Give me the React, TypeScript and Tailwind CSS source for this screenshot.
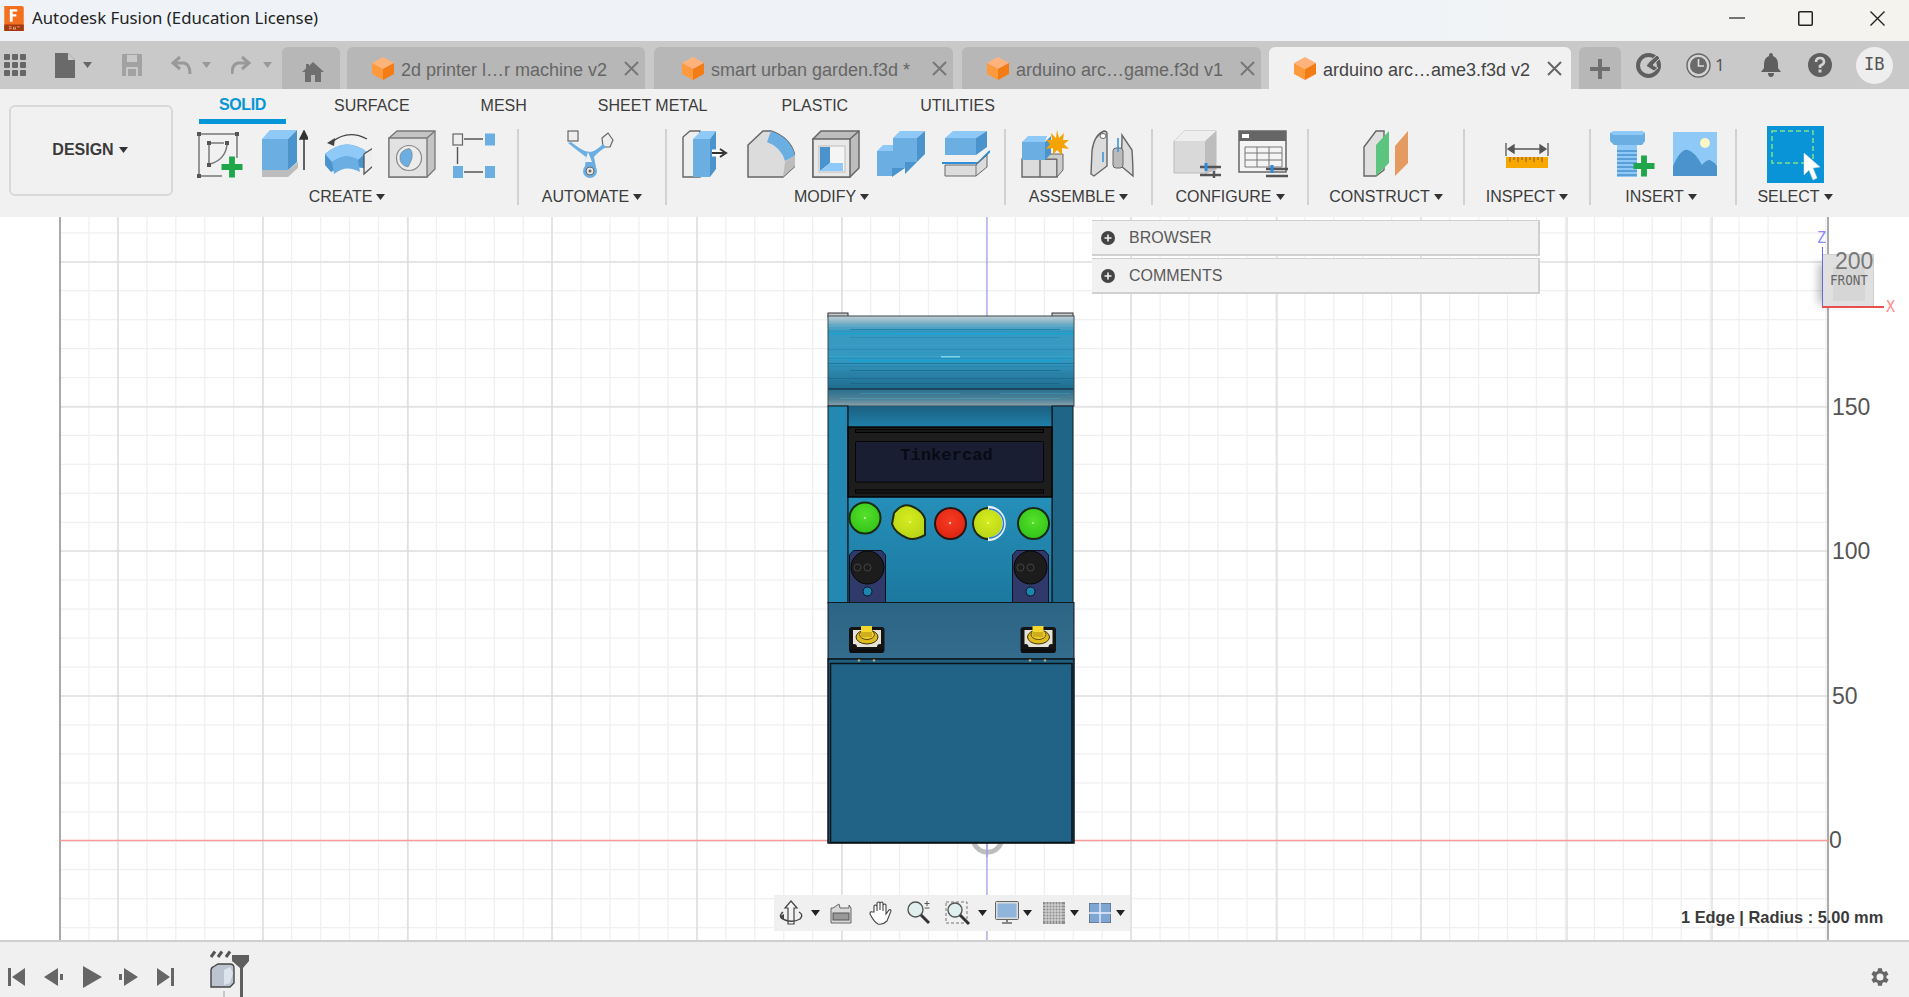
import React from "react";

const B1 = "#6aaee2", B2 = "#8ec9f8", B3 = "#4a93cc", G1 = "#dcdcdc", G2 = "#bdbdbd";

function Caret({ c = "#333" }: { c?: string }) {
  return (
    <svg width="9" height="6" viewBox="0 0 9 6" className="shrink-0">
      <path d="M0 0h9L4.5 6z" fill={c} />
    </svg>
  );
}

function I({ children, w = 48, h = 48, className = "" }: { children: React.ReactNode; w?: number; h?: number; className?: string }) {
  return (
    <svg width={w} height={h} viewBox={`0 0 ${w} ${h}`} className={"shrink-0 " + className}>
      {children}
    </svg>
  );
}

const Plus = ({ x, y, s = 20 }: { x: number; y: number; s?: number }) => (
  <path d={`M${x - s / 2} ${y}h${s}M${x} ${y - s / 2}v${s}`} stroke="#1fa64b" strokeWidth={s / 3.6} fill="none" />
);

function SketchIcon() {
  return (
    <I>
      <path d="M3 4H41M3 4V46H26M41 4V28" stroke="#777" strokeWidth="1.5" fill="none" />
      {[[1, 2], [39, 2], [1, 44]].map(([x, y]) => <rect key={x + "-" + y} x={x} y={y} width="4" height="4" fill="#555" />)}
      <path d="M13 13H28M13 13V33M31 15Q29 30 14 34" stroke="#777" strokeWidth="1.5" fill="none" />
      <rect x="11" y="11" width="4" height="4" fill="#555" /><rect x="11" y="33" width="4" height="4" fill="#555" />
      <rect x="29" y="11" width="4" height="4" fill="#555" />
      <Plus x={36} y={37} s={21} />
    </I>
  );
}
function ExtrudeIcon() {
  return (
    <I>
      <path d="M2 40V47H28L38 38V32L28 40z" fill={G2} />
      <path d="M2 9H28V40H2z" fill={B1} /><path d="M2 9L10 0H37L28 9z" fill={B2} /><path d="M28 9L37 0V32L28 40z" fill={B3} />
      <path d="M44 40V4M40 9L44 1L48 9z" stroke="#333" strokeWidth="1.5" fill="#333" />
    </I>
  );
}
function RevolveIcon() {
  return (
    <I>
      <path d="M8 12Q24 -1 43 9" stroke="#444" strokeWidth="1.4" fill="none" />
      <path d="M3 13L11 8L10 16z" fill="#444" />
      <path d="M1 24Q22 6 43 22L43 38Q34 38 28 36Q16 36 7 42L1 35z" fill={B3} />
      <path d="M1 24Q22 6 43 22L34 30Q22 22 8 32z" fill={B2} />
      <path d="M8 32Q22 22 34 30L36 42Q22 34 10 44z" fill={B1} />
      <path d="M40 24L49 18V36L40 44z" fill="#eee" stroke="#555" strokeWidth="1.3" />
    </I>
  );
}
function HoleIcon() {
  return (
    <I>
      <path d="M1 8L9 1H47V39L39 47H1z" fill="#c4c4c4" stroke="#777" strokeWidth="1.3" />
      <path d="M1 8H39V47H1z" fill="#e2e2e2" stroke="#777" strokeWidth="1.3" />
      <path d="M39 8L47 1" stroke="#777" strokeWidth="1.3" />
      <circle cx="21" cy="28" r="12.5" fill="#ececec" stroke="#888" strokeWidth="1.2" />
      <path d="M12 26Q13 20 21 18.5Q25 20 24 28Q22 34 20 37Q11 35 12 26z" fill={B1} stroke="#777" strokeWidth=".6" />
    </I>
  );
}
function PatternIcon() {
  return (
    <I>
      <rect x="1" y="4" width="9.5" height="11" fill="#eee" stroke="#666" strokeWidth="1.2" />
      <rect x="33" y="3.5" width="10" height="12" fill={B1} />
      <rect x="1" y="36" width="10" height="12" fill={B1} />
      <rect x="33" y="36" width="10" height="12" fill={B1} />
      <path d="M12 9H31M12 42H31M5.5 17V34" stroke="#555" strokeWidth="1.4" />
    </I>
  );
}
function AutomateIcon() {
  return (
    <I w={52}>
      <rect x="2" y="1" width="10" height="10" fill="#eee" stroke="#666" strokeWidth="1.2" />
      <path d="M36 8L42 3L47 10L44 17H37z" fill="#eee" stroke="#666" strokeWidth="1.2" />
      <path d="M5 12Q10 16 15 19Q19 22 24 22Q30 21 37 14L40 17Q32 22 28 27L30 37H19L20 27Q12 21 2 13z" fill={B1} />
      <path d="M22 22L26 32H19z" fill="#f1f1f1" />
      <circle cx="24" cy="41" r="7" fill={B1} />
      <circle cx="24" cy="41" r="4" fill="#e8e8e8" stroke="#666" /><circle cx="24" cy="41" r="1.5" fill="#666" />
    </I>
  );
}
function PressPullIcon() {
  return (
    <I>
      <path d="M1 7L8 1H18V47H1z" fill="#eee" stroke="#666" strokeWidth="1.4" />
      <path d="M11 9H28V47H11z" fill={B1} /><path d="M11 9L19 1H34L28 9z" fill={B2} /><path d="M28 9L34 1V39L28 47z" fill={B3} />
      <path d="M30 23H44" stroke="#fff" strokeWidth="7" />
      <path d="M30 23H42M38 19L44 23L38 27" stroke="#333" strokeWidth="2" fill="none" />
    </I>
  );
}
function FilletIcon() {
  return (
    <I>
      <path d="M1 15L16 1H24Q44 8 48 26V36L36 47H1z" fill={G1} stroke="#666" strokeWidth="1.5" />
      <path d="M20 12L24 1Q44 8 48 26L38 31Q34 17 20 12z" fill={B1} />
      <path d="M38 32L48 25V36L36 47z" fill={G2} />
    </I>
  );
}
function ShellIcon() {
  return (
    <I>
      <path d="M1 9L9 1H47V38L38 47H1z" fill={G2} stroke="#666" strokeWidth="1.5" />
      <path d="M1 9H38V47H1z" fill="#e8e8e8" stroke="#666" strokeWidth="1.5" />
      <path d="M38 9L47 1" stroke="#666" strokeWidth="1.5" />
      <rect x="7" y="16" width="26" height="26" fill="#f5f5f5" stroke="#bbb" />
      <path d="M8 17H18V33L8 41z" fill={B3} /><path d="M8 41L18 33H31V41z" fill={B2} />
    </I>
  );
}
function CombineIcon() {
  return (
    <I>
      <path d="M16 8H40V32H28V38H15V46H0V21H14V17H16z" fill={B1} />
      <path d="M16 8L23 1H48L40 8z" fill={B2} /><path d="M40 8L48 1V24L40 32z" fill={B3} />
      <path d="M0 21L6 15H16V21z" fill={B2} />
      <path d="M28 32H40L28 44z" fill={B3} /><path d="M15 38H28L15 47z" fill={B3} />
    </I>
  );
}
function OffsetIcon() {
  return (
    <I>
      <path d="M3 8L11 1H45L34 8z" fill={B2} />
      <path d="M34 8L45 1V17L34 25z" fill={B3} /><rect x="3" y="8" width="31" height="17" fill={B1} />
      <path d="M0 33H36L48 21" stroke="#2f8fd8" strokeWidth="2" fill="none" />
      <path d="M3 35H34L45 25V37L34 46H3z" fill={G1} stroke="#666" strokeWidth="1" />
      <path d="M34 35V46" stroke="#777" />
    </I>
  );
}
function NewComponentIcon() {
  return (
    <I w={50}>
      <path d="M1 29H19V47H1zM19 29H36V47H19z" fill={G1} stroke="#666" strokeWidth="1.4" />
      <path d="M19 29L27 24H42V40L36 47V29z" fill="#ccc" stroke="#666" />
      <path d="M1 12H24V30H1z" fill={B1} /><path d="M1 12L7 6H26L24 12z" fill={B2} /><path d="M24 12L30 6V24L24 30z" fill={B3} />
      <path d="M36 0L38 8L43 3L42 10L48 10L43 14L48 19L41 18L41 25L36 20L32 25L32 18L25 19L29 14L25 10L31 10L30 3L35 8z" fill="#f5a300" />
    </I>
  );
}
function JointIcon() {
  return (
    <I>
      <path d="M3 21Q5 5 15 1Q18 1 18 4V36L5 46L2 44z" fill={G1} stroke="#666" strokeWidth="1.4" />
      <path d="M33 10V5L43 20Q44 36 44 46L32 36z" fill={G1} stroke="#666" strokeWidth="1.4" />
      <rect x="24" y="18" width="10" height="20" rx="3" fill="#bbb" stroke="#666" />
      <ellipse cx="14" cy="6" rx="3" ry="2.5" fill="#fff" stroke="#666" />
      <path d="M14 22V32M29 8V22" stroke="#3a96e0" strokeWidth="1.6" />
    </I>
  );
}
function ConfigIcon() {
  return (
    <I>
      <path d="M1 11L11 1H43V40H34V43H1z" fill="#d9d9d9" stroke="#bbb" />
      <path d="M32 11L43 1V40L32 44z" fill={G2} /><path d="M1 11L11 1H43L32 11z" fill="#eee" />
      <path d="M27 37H48M27 45H48" stroke="#555" strokeWidth="2.4" />
      <path d="M33 33V41" stroke="#2a8ae0" strokeWidth="3" /><path d="M41 41V48" stroke="#555" strokeWidth="2.4" />
    </I>
  );
}
function TableIcon() {
  return (
    <I w={50}>
      <rect x="1" y="1" width="47" height="41" fill="#f4f4f4" stroke="#666" strokeWidth="1.5" />
      <rect x="1" y="1" width="47" height="10" fill="#666" /><rect x="4" y="4" width="7" height="4" fill="#fff" />
      <path d="M7 17H44V37H7zM7 23H44M7 30H44M19 17V37M31 17V37" stroke="#777" strokeWidth="1" fill="none" />
      <path d="M28 39H50M28 46H50" stroke="#555" strokeWidth="2.4" fill="none" />
      <path d="M34 35V43" stroke="#2a8ae0" strokeWidth="3" />
    </I>
  );
}
function ConstructIcon() {
  return (
    <I>
      <path d="M2 17L14 1H22V40L14 46H2z" fill="#e0e0e0" stroke="#666" strokeWidth="1.4" />
      <path d="M14 15L27 1V33L14 46z" fill="#5bc47e" />
      <path d="M33 16L46 1V33L33 46z" fill="#e49a60" />
    </I>
  );
}
function InspectIcon() {
  return (
    <I w={44}>
      <path d="M1 13V26M43 13V26" stroke="#555" strokeWidth="1.3" />
      <path d="M4 19H40M3 19L9 15V23zM41 19L35 15V23z" stroke="#555" strokeWidth="1.3" fill="#555" />
      <rect x="1" y="27" width="42" height="11" fill="#f6a800" />
      <path d="M5 27v5M9 27v3M13 27v5M17 27v3M21 27v5M25 27v3M29 27v5M33 27v3M37 27v5" stroke="#8a5a10" strokeWidth="1" />
    </I>
  );
}
function BoltIcon() {
  return (
    <I w={50}>
      <path d="M1 3L5 1H33L36 3V11L33 15H5L1 11z" fill={B1} />
      <path d="M1 3L5 1H33L36 3L33 5H5z" fill={B2} />
      <rect x="8" y="15" width="20" height="32" fill={B2} />
      <path d="M8 21H28M8 25H28M8 29H28M8 33H28M8 37H28M8 41H28M8 45H28" stroke={B3} strokeWidth="1.6" />
      <Plus x={35} y={36} s={21} />
    </I>
  );
}
function ImageIcon() {
  return (
    <I w={44}>
      <rect x="0" y="2" width="44" height="44" fill={B2} />
      <path d="M0 36Q8 18 15 20Q22 22 29 35Q33 30 37 30Q41 32 44 36V46H0z" fill={B3} />
      <circle cx="32" cy="13" r="5" fill="#fbf6c4" />
    </I>
  );
}
function SelectIcon() {
  return (
    <I w={57} h={57}>
      <rect width="57" height="57" fill="#0994d8" />
      <rect x="5" y="5" width="41" height="32" fill="none" stroke="#7fe08e" strokeWidth="1.5" strokeDasharray="5 3" />
      <path d="M37 27L53 41L46 42L50 52L46 54L42 44L37 49z" fill="#fff" stroke="#ddd" strokeWidth=".5" />
    </I>
  );
}

function Cube() {
  return (
    <svg width="22" height="23" viewBox="0 0 22 23" className="shrink-0">
      <path d="M11 0L22 6L11 12L0 6z" fill="#ffb37a" />
      <path d="M0 6L11 12V23L0 17z" fill="#ff9a3c" />
      <path d="M22 6L11 12V23L22 17z" fill="#f47c14" />
    </svg>
  );
}

function Tab({ label, active = false, w }: { label: string; active?: boolean; w: string }) {
  return (
    <div className={`flex items-center h-[42px] rounded-t-[6px] ${w} ${active ? "bg-[#f1f1f1] text-[#444]" : "bg-[#b7b7b7] text-[#666]"}`}>
      <Cube />
      <span className="ml-[7px] text-[18px] whitespace-nowrap leading-none pt-[4px]">{label}</span>
      <svg width="15" height="15" viewBox="0 0 15 15" className="ml-auto shrink-0">
        <path d="M1 1L14 14M14 1L1 14" stroke={active ? "#666" : "#777"} strokeWidth="2" />
      </svg>
    </div>
  );
}

function Group({ label, w, lc = "", children }: { label: string; w: string; lc?: string; children: React.ReactNode }) {
  return (
    <div className={`flex flex-col items-center shrink-0 ${w}`}>
      <div className="h-[58px] flex items-center">{children}</div>
      <div className={`h-[27px] flex items-center gap-[4px] text-[16px] text-[#3c3c3c] whitespace-nowrap ${lc}`}>
        {label}
        <Caret />
      </div>
    </div>
  );
}
const Sep = () => <div className="w-[2px] h-[76px] mt-[4px] bg-[#d2d2d2] shrink-0 -mx-[1px]" />;

const vMinor = Array.from({ length: 62 }, (_, i) => 60 + i * 28.95);
const hLines = Array.from({ length: 26 }, (_, i) => 232.8 + i * 28.95);
const vMajor = [118, 263, 408, 552, 697, 842, 1131, 1277, 1421, 1567, 1712];
const hMajor = [262, 407, 551, 696];

const roofStripes: [number, number, string][] = [
  [322, 1, "#7eb3c9"], [324, 1, "#5ea9c7"], [327, 1, "#4aa3c6"], [329, 1, "#1f85ad"], [331, 1, "#2b93bd"], [333, 1.5, "#17a3cf"],
  [337, 1, "#2a8fb8"], [345, 1, "#3a9ec6"], [349, 1, "#2b8ab3"], [352, 1, "#2f96bf"], [356, 1, "#39a1c8"], [358, 1, "#1a94c4"],
  [360, 1.5, "#16a0d0"], [363, 1, "#1c7ba3"], [366, 1, "#2a86ad"], [370, 1, "#1d7095"], [373, 1, "#2b7ea3"], [378, 1, "#1e6c8f"], [383, 1, "#1c6788"],
];

function Canvas() {
  return (
    <div className="relative flex-1 bg-white overflow-hidden">
      <svg width="1909" height="723" viewBox="0 217 1909 723" className="block">
        <defs>
          <linearGradient id="roof" x1="0" y1="0" x2="0" y2="1">
            <stop offset="0" stopColor="#c3d0d6" /><stop offset=".08" stopColor="#88b4c7" /><stop offset=".2" stopColor="#3a9ac1" />
            <stop offset=".6" stopColor="#3498c0" /><stop offset="1" stopColor="#1f6c8f" />
          </linearGradient>
          <linearGradient id="roof2" x1="0" y1="0" x2="0" y2="1">
            <stop offset="0" stopColor="#2a6f8f" /><stop offset=".6" stopColor="#4f8296" /><stop offset="1" stopColor="#8ba2ad" />
          </linearGradient>
          <linearGradient id="panel" x1="0" y1="0" x2="0" y2="1">
            <stop offset="0" stopColor="#2590ba" /><stop offset="1" stopColor="#1c789f" />
          </linearGradient>
          <linearGradient id="head" x1="0" y1="0" x2="0" y2="1">
            <stop offset="0" stopColor="#1c5f80" /><stop offset="1" stopColor="#1f80aa" />
          </linearGradient>
          <linearGradient id="lower" x1="0" y1="0" x2="0" y2="1">
            <stop offset="0" stopColor="#2b6485" /><stop offset="1" stopColor="#346c8e" />
          </linearGradient>
          <radialGradient id="gr" cx=".5" cy=".4" r=".6"><stop offset="0" stopColor="#55e02a" /><stop offset="1" stopColor="#33c41a" /></radialGradient>
          <radialGradient id="ye" cx=".5" cy=".4" r=".6"><stop offset="0" stopColor="#d5ec1e" /><stop offset="1" stopColor="#b9d518" /></radialGradient>
          <radialGradient id="re" cx=".5" cy=".4" r=".6"><stop offset="0" stopColor="#f83a22" /><stop offset="1" stopColor="#dd2412" /></radialGradient>
        </defs>
        {vMinor.map((x) => <path key={x} d={`M${x} 217V940`} stroke="#f0f0f0" strokeWidth="1.3" />)}
        {hLines.map((y) => <path key={y} d={`M60 ${y}H1828`} stroke="#f0f0f0" strokeWidth="1.3" />)}
        {vMajor.map((x) => <path key={x} d={`M${x} 217V940`} stroke="#d8d8d8" strokeWidth="1.2" />)}
        {hMajor.map((y) => <path key={y} d={`M60 ${y}H1828`} stroke="#d8d8d8" strokeWidth="1.2" />)}
        <path d="M60 217V940" stroke="#8f8f8f" strokeWidth="1.5" />
        <path d="M1828 217V940" stroke="#8f8f8f" strokeWidth="1.5" />
        <path d="M987 217V940" stroke="#9c9ce8" strokeWidth="1.2" />
        <path d="M60 840.5H1828" stroke="#f79a9a" strokeWidth="1.5" />

        {/* origin marker */}
        <path d="M974 843A14.5 14.5 0 0 0 1001 843" fill="none" stroke="#bdbdbd" strokeWidth="5" />
        <path d="M987 843V857" stroke="#9c9ce8" strokeWidth="1.2" />

        {/* arcade cabinet */}
        <rect x="828" y="313" width="20" height="4" fill="#c8c8c8" stroke="#333" />
        <rect x="1052" y="313" width="21" height="4" fill="#c8c8c8" stroke="#333" />
        <rect x="828" y="316" width="246" height="73" fill="url(#roof)" />
        {roofStripes.map(([y, h, c], i) => (
          <rect key={i} x={i % 3 === 0 ? 850 : 828} y={y} width={i % 3 === 0 ? 210 : 246} height={h} fill={c} />
        ))}
        <rect x="890" y="333" width="123" height="1.5" fill="#18a4d4" />
        <rect x="941" y="356" width="19" height="1.5" fill="#7fd2ec" />
        <rect x="828" y="389" width="246" height="17" fill="url(#roof2)" />
        <rect x="860" y="393" width="100" height="1" fill="#3f8aa8" /><rect x="1000" y="393" width="70" height="1" fill="#3f8aa8" />
        <rect x="840" y="398" width="220" height="1" fill="#4a94b0" />
        <path d="M828 389H1074" stroke="#12222c" strokeWidth="1" />
        <rect x="828" y="316" width="246" height="90" fill="none" stroke="#3c4a50" strokeWidth="1" />

        <rect x="828" y="406" width="20" height="197" fill="#2389b3" stroke="#101a20" strokeWidth="1" />
        <rect x="1052" y="406" width="21" height="197" fill="#1f6588" stroke="#101a20" strokeWidth="1" />
        <rect x="848" y="406" width="204" height="21" fill="url(#head)" />
        <rect x="848" y="497" width="204" height="106" fill="url(#panel)" />
        <path d="M848 406V603M1052 406V603" stroke="#0c1418" strokeWidth="1.2" />

        <rect x="848" y="427" width="204" height="70" fill="#1d1d1d" stroke="#050505" strokeWidth="1.5" />
        <rect x="855.5" y="429.5" width="188" height="3" fill="#181818" stroke="#000" strokeWidth="1" />
        <rect x="855.5" y="490" width="188" height="3" fill="#181818" stroke="#000" strokeWidth="1" />
        <rect x="855.5" y="441.5" width="188" height="40.5" rx="1" fill="#191e33" stroke="#060606" strokeWidth="1" />
        <text x="946.5" y="460" textAnchor="middle" fontFamily="'Liberation Mono', monospace" fontSize="17" fontWeight="700" fill="#070b14" letterSpacing=".1">Tinkercad</text>

        <circle cx="865" cy="518" r="15.5" fill="url(#gr)" stroke="#1c2a14" strokeWidth="2" />
        <path d="M894 513Q902 503 911 506Q922 510 925 519V535Q914 541 907 538Q895 533 892 524z" fill="url(#ye)" stroke="#1f2a10" strokeWidth="2" />
        <circle cx="950.5" cy="523.5" r="15.5" fill="url(#re)" stroke="#2a1512" strokeWidth="2" />
        <circle cx="988.5" cy="523.5" r="15.5" fill="url(#ye)" stroke="#1f2a10" strokeWidth="2" />
        <path d="M988 507.5A16 16 0 0 1 988 539.5" fill="none" stroke="#e7f0fa" strokeWidth="3.5" />
        <path d="M989 509A14.5 14.5 0 0 1 989 538" fill="none" stroke="#2b7fd6" strokeWidth="1.5" />
        <circle cx="1033.5" cy="523.5" r="15.5" fill="url(#gr)" stroke="#1a2a18" strokeWidth="2" />
        <circle cx="865" cy="518" r="1" fill="#c9f5b5" /><circle cx="910" cy="522" r="1" fill="#eef7a8" /><circle cx="950" cy="523" r="1.2" fill="#ffc0b0" /><circle cx="988" cy="523" r="1" fill="#eef7a8" /><circle cx="1033" cy="523" r="1" fill="#c9f5b5" />

        {[849.5, 1012.5].map((x) => (
          <g key={x}>
            <path d={`M${x + 4} 550.5H${x + 32}L${x + 36} 555V603H${x}V555z`} fill="#2f3a6b" stroke="#0c1020" strokeWidth="1" />
            <circle cx={x + 18} cy="567.5" r="16.5" fill="#1c1c1c" stroke="#060606" />
            <circle cx={x + 18} cy="567.5" r="3.5" fill="none" stroke="#444" />
            <circle cx={x + 8} cy="567.5" r="3.5" fill="none" stroke="#444" />
            <circle cx={x + 18} cy="591.5" r="4.5" fill="#1b86ae" stroke="#0c1020" />
          </g>
        ))}

        <rect x="828" y="602.5" width="246" height="56.5" fill="url(#lower)" stroke="#101a20" strokeWidth="1" />
        {[849, 1020.5].map((x) => (
          <g key={x}>
            <rect x={x} y="627" width="35.5" height="26" rx="3" fill="#141414" />
            <rect x={x + 4} y="630" width="28" height="17" fill="#e6e3d8" />
            <circle cx={x + 5} cy="647" r="3" fill="#141414" /><circle cx={x + 31} cy="647" r="3" fill="#141414" />
            <ellipse cx={x + 18} cy="637" rx="11" ry="7" fill="#e0bb1e" stroke="#3a2f05" />
            <ellipse cx={x + 18} cy="634.5" rx="7.5" ry="5" fill="#efcf2a" stroke="#5a4808" />
            <rect x={x + 12} y="626" width="11" height="11" fill="#f4d62e" /><rect x={x + 12} y="632" width="11" height="5" fill="#d0ad1c" />
            <rect x={x + 1} y="649" width="33" height="4" fill="#0e0e0e" />
          </g>
        ))}
        <rect x="828" y="659" width="246" height="184" fill="#1f5f80" stroke="#0c1418" strokeWidth="1.5" />
        <rect x="830.5" y="663.5" width="241.5" height="179" fill="#206387" stroke="#0a1116" strokeWidth="1.5" />
        {[859, 874, 1030, 1045].map((x) => <circle key={x} cx={x} cy="660.5" r="1.3" fill="#b3a77a" />)}
      </svg>

      {/* axis numbers */}
      <span className="absolute left-[1832px] top-[175px] text-[23px] leading-[30px] text-[#555]">150</span>
      <span className="absolute left-[1832px] top-[319px] text-[23px] leading-[30px] text-[#555]">100</span>
      <span className="absolute left-[1832px] top-[464px] text-[23px] leading-[30px] text-[#555]">50</span>
      <span className="absolute left-[1829px] top-[608px] text-[23px] leading-[30px] text-[#555]">0</span>

      {/* view cube */}
      <div className="absolute left-[1822px] top-[37px] w-[52px] h-[53px] bg-[#e0e0e0] border border-[#d0d0d0] shadow-[-10px_3px_8px_-6px_rgba(0,0,0,0.25)]">
        <div className="absolute left-[10px] top-[12px] w-[32px] h-[34px] bg-[#d6d6d6]" />
        <span className="absolute left-[12px] -top-[4px] text-[23px] leading-[20px] text-[#777]">200</span>
        <span className="absolute left-[7px] top-[17px] text-[14px] leading-[16px] text-[#666] scale-x-90 origin-left font-['DejaVu_Sans_Mono',monospace]">FRONT</span>
      </div>
      <div className="absolute left-[1822px] top-[30px] w-[1px] h-[60px] bg-[#6a6ae8]" />
      <div className="absolute left-[1822px] top-[89px] w-[62px] h-[2px] bg-[#e85050]" />
      <span className="absolute left-[1817px] top-[12px] text-[15px] leading-[18px] text-[#8a8aff] font-['DejaVu_Sans_Mono',monospace]">Z</span>
      <span className="absolute left-[1886px] top-[81px] text-[15px] leading-[18px] text-[#ff8a8a] font-['DejaVu_Sans_Mono',monospace]">X</span>

      {/* browser / comments */}
      <div className="absolute left-[1092px] top-[3px] w-[448px] flex flex-col gap-[2px]">
        {["BROWSER", "COMMENTS"].map((t) => (
          <div key={t} className="h-[36px] bg-[#f1f1f1] border-r-2 border-b-2 border-t border-[#d0d0d0] flex items-center pl-[9px] pt-[1px] text-[16px] text-[#5a5a5a]">
            <svg width="14" height="14" viewBox="0 0 14 14" className="mr-[14px]">
              <circle cx="7" cy="7" r="7" fill="#444" /><path d="M3.5 7h7M7 3.5v7" stroke="#f1f1f1" strokeWidth="1.6" />
            </svg>
            {t}
          </div>
        ))}
      </div>

      {/* navigation bar */}
      <div className="absolute left-[774px] top-[678px] w-[356px] h-[36px] bg-[#f0f0f0] flex items-center pl-[5px]">
        <svg width="24" height="26" viewBox="0 0 24 26" className="shrink-0">
          <path d="M12 1L18 8H15V24H9V8H6z" fill="#f4f4f4" stroke="#444" strokeWidth="1.2" />
          <path d="M4 12Q-2 17 6 20Q14 23 21 19Q25 15 20 12" fill="none" stroke="#444" strokeWidth="1.4" />
          <path d="M1 16L5 14L5 20z" fill="#444" />
        </svg>
        <span className="ml-[8px]"><Caret c="#222" /></span>
        <svg width="24" height="24" viewBox="0 0 24 24" className="ml-[9px] shrink-0">
          <path d="M4 7L10 3L11 7H20V4L22 7V22H2V7z" fill="#d8d8d8" stroke="#666" />
          <rect x="4" y="12" width="16" height="7" fill="#999" stroke="#555" />
        </svg>
        <svg width="24" height="26" viewBox="0 0 24 26" className="ml-[16px] shrink-0">
          <path d="M5 12V6Q6 4 8 6V11V3Q10 1 11 3V10V3Q13 1 14 3V11V5Q16 3 17 5V14L20 10Q22 9 22 11L18 21Q14 25 9 24Q5 22 1 14Q1 11 3 12z" fill="#fff" stroke="#444" strokeWidth="1.1" />
        </svg>
        <svg width="26" height="26" viewBox="0 0 26 26" className="ml-[13px] shrink-0">
          <circle cx="9.5" cy="9.5" r="7.5" fill="#dff0ee" stroke="#555" strokeWidth="1.4" />
          <path d="M15 15L23 23" stroke="#333" strokeWidth="3" /><path d="M21 1v5M18.5 3.5h5M18.5 8h5" stroke="#555" strokeWidth="1" />
        </svg>
        <svg width="26" height="26" viewBox="0 0 26 26" className="ml-[13px] shrink-0">
          <rect x="1" y="2" width="21" height="21" fill="none" stroke="#777" strokeDasharray="3 2" />
          <circle cx="10" cy="10" r="7" fill="#dff0ee" stroke="#555" strokeWidth="1.4" />
          <path d="M15 15L24 24" stroke="#333" strokeWidth="3" />
        </svg>
        <span className="ml-[7px]"><Caret c="#222" /></span>
        <svg width="24" height="24" viewBox="0 0 24 24" className="ml-[8px] shrink-0">
          <rect x=".5" y=".5" width="23" height="18" rx="1" fill="#dcdcdc" stroke="#666" />
          <rect x="2.5" y="2.5" width="19" height="14" fill="#8fb5dc" />
          <path d="M12 19v2M7 22h10" stroke="#666" strokeWidth="1.6" />
        </svg>
        <span className="ml-[4px]"><Caret c="#222" /></span>
        <svg width="22" height="22" viewBox="0 0 22 22" className="ml-[11px] shrink-0">
          <rect x="0" y="0" width="22" height="22" fill="#8c8c8c" />
          <path d="M3 0v22M6 0v22M9 0v22M12 0v22M15 0v22M18 0v22M0 3h22M0 6h22M0 9h22M0 12h22M0 15h22M0 18h22" stroke="#ddd" strokeWidth="1" />
        </svg>
        <span className="ml-[5px]"><Caret c="#222" /></span>
        <svg width="22" height="20" viewBox="0 0 22 20" className="ml-[10px] shrink-0">
          <rect x="0" y="0" width="22" height="20" fill="#7ea6d3" stroke="#556" />
          <path d="M11 0v20M0 10h22" stroke="#eef" strokeWidth="1.4" />
        </svg>
        <span className="ml-[5px]"><Caret c="#222" /></span>
      </div>

      <span className="absolute left-[1681px] top-[691px] text-[16.4px] leading-[18px] font-bold text-[#3a3a3a]">1 Edge | Radius : 5.00 mm</span>
    </div>
  );
}

export default function App() {
  return (
    <div className="w-[1909px] h-screen flex flex-col overflow-hidden bg-white font-['Liberation_Sans',Arial,sans-serif]">
      {/* title bar */}
      <div className="h-[41px] shrink-0 pb-[5px] flex items-center bg-linear-to-r from-[#eff3f8] via-[#eff3f8] via-70% to-[#f5f3ee]">
        <svg width="22" height="26" viewBox="0 0 23 28" className="ml-[3px] shrink-0">
          <path d="M1 1H20Q22 1 22 3V28H2Q1 28 1 26z" fill="#f37021" />
          <rect x="1" y="21" width="21" height="7" fill="#a43b10" />
          <path d="M7 4.5H15V7H10V10H14V12.5H10V18H7z" fill="#fff" />
          <path d="M6 23.5H9M6 25.5H9M11 23.5V26H13V23.5M15 23.5H17.5" stroke="#f7c9a5" strokeWidth=".8" fill="none" />
        </svg>
        <span className="ml-[7px] text-[16.8px] font-['Noto_Sans',sans-serif] text-[#222]">Autodesk Fusion (Education License)</span>
        <svg width="16" height="16" viewBox="0 0 16 16" className="ml-auto mr-[53px] shrink-0"><path d="M0 8H16" stroke="#222" strokeWidth="1.2" /></svg>
        <svg width="15" height="15" viewBox="0 0 15 15" className="mr-[57px] shrink-0"><rect x=".75" y=".75" width="13.5" height="13.5" rx="1" fill="none" stroke="#222" strokeWidth="1.5" /></svg>
        <svg width="15" height="15" viewBox="0 0 15 15" className="mr-[24px] shrink-0"><path d="M.5.5L14.5 14.5M14.5.5L.5 14.5" stroke="#222" strokeWidth="1.4" /></svg>
      </div>

      {/* document tabs */}
      <div className="h-[48px] shrink-0 bg-[#c9c9c9] flex items-end">
        <div className="w-[282px] h-[48px] flex items-center shrink-0">
          <svg width="22" height="22" viewBox="0 0 22 22" className="ml-[4px]">
            {[0, 8, 16].flatMap((y) => [0, 8, 16].map((x) => <rect key={x + "," + y} x={x} y={y} width="6" height="6" rx="1" fill="#666" />))}
          </svg>
          <svg width="20" height="25" viewBox="0 0 20 25" className="ml-[29px]"><path d="M0 0H13L20 7V25H0z" fill="#6a6a6a" /><path d="M13 0V7H20" fill="#c9c9c9" /></svg>
          <span className="ml-[8px]"><Caret c="#666" /></span>
          <svg width="22" height="24" viewBox="0 0 22 24" className="ml-[29px]">
            <path d="M1 1H21V23H1z" fill="#a2a2a2" /><rect x="6" y="2" width="10" height="7" fill="#c9c9c9" /><rect x="5" y="14" width="12" height="9" fill="#c9c9c9" /><rect x="7" y="16" width="8" height="7" fill="#a2a2a2" />
          </svg>
          <svg width="21" height="20" viewBox="0 0 21 20" className="ml-[28px]"><path d="M9 2L2 8L9 14M3 8H13Q19 9 19 19" fill="none" stroke="#999" strokeWidth="3" /></svg>
          <span className="ml-[10px]"><Caret c="#999" /></span>
          <svg width="20" height="20" viewBox="0 0 20 20" className="ml-[20px]"><path d="M11 2L18 8L11 14M17 8H7Q1 9 1 19" fill="none" stroke="#999" strokeWidth="3" /></svg>
          <span className="ml-[12px]"><Caret c="#999" /></span>
        </div>
        <div className="flex items-end gap-[7px]">
          <div className="w-[58px] h-[42px] rounded-t-[6px] bg-[#b7b7b7] flex items-center justify-center">
            <svg width="22" height="20" viewBox="0 0 22 20" className="mt-[7px] ml-[4px]"><path d="M11 0L22 10H19V20H13V13H9V20H3V10H0L4 6.5V2H7V4z" fill="#6f6f6f" /></svg>
          </div>
          <Tab w="w-[298px] pl-[25px] pr-[6px]" label="2d printer l…r machine v2" />
          <Tab w="w-[299px] ml-[2px] pl-[28px] pr-[6px]" label="smart urban garden.f3d *" />
          <Tab w="w-[299px] ml-[2px] pl-[25px] pr-[6px]" label="arduino arc…game.f3d v1" />
          <Tab w="w-[302px] ml-[1px] pl-[25px] pr-[9px]" active label="arduino arc…ame3.f3d v2" />
          <div className="w-[42px] h-[42px] ml-[1px] rounded-t-[6px] bg-[#b7b7b7] flex items-center justify-center">
            <svg width="20" height="20" viewBox="0 0 20 20" className="mt-[1px]"><path d="M0 10H20M10 0V20" stroke="#6f6f6f" strokeWidth="4" /></svg>
          </div>
        </div>
        <div className="h-[48px] flex items-center flex-1 min-w-0">
          <svg width="25" height="25" viewBox="0 0 25 25" className="ml-[15px] shrink-0">
            <circle cx="12.5" cy="12.5" r="10.5" fill="none" stroke="#5f5f5f" strokeWidth="4" />
            <path d="M13 9L21 2L24 5L17 12L22 15L18 18L10 13z" fill="#5f5f5f" stroke="#c9c9c9" strokeWidth="1" />
          </svg>
          <svg width="25" height="25" viewBox="0 0 25 25" className="ml-[25px] shrink-0">
            <circle cx="12.5" cy="12.5" r="11.5" fill="#d4d4d4" stroke="#666" strokeWidth="1.4" />
            <circle cx="12.5" cy="12.5" r="8.5" fill="#6a6a6a" />
            <path d="M12.5 6V13H18" fill="none" stroke="#ddd" strokeWidth="1.6" />
          </svg>
          <span className="ml-[4px] text-[17px] text-[#555] font-['Noto_Sans',sans-serif]">1</span>
          <svg width="20" height="24" viewBox="0 0 20 24" className="ml-[36px] shrink-0">
            <path d="M10 0Q12 0 12 3Q17 5 17 11V15L20 19H0L3 15V11Q3 5 8 3Q8 0 10 0zM7 20H13Q13 24 10 24Q7 24 7 20z" fill="#5f5f5f" />
          </svg>
          <svg width="24" height="24" viewBox="0 0 24 24" className="ml-[27px] shrink-0">
            <circle cx="12" cy="12" r="12" fill="#5f5f5f" />
            <path d="M8 9Q8 5 12 5Q16 5 16 9Q16 11 12 13V15" fill="none" stroke="#d4d4d4" strokeWidth="2.6" />
            <rect x="10.5" y="16.5" width="3" height="3" fill="#d4d4d4" />
          </svg>
          <div className="ml-[24px] w-[37px] h-[37px] rounded-full bg-[#eeeeee] flex items-center justify-center text-[17px] text-[#555] font-['DejaVu_Sans_Mono',monospace] shrink-0">IB</div>
        </div>
      </div>

      {/* ribbon */}
      <div className="h-[128px] shrink-0 bg-[#f1f1f1] flex">
        <div className="w-[176px] shrink-0 pl-[9px] pt-[16px]">
          <div className="w-[164px] h-[91px] rounded-[6px] border-2 border-[#d9d9d9] flex items-center justify-center gap-[5px] pb-[2px] pr-[2px] text-[16px] font-bold text-[#3a3a3a]">
            DESIGN
            <Caret />
          </div>
        </div>
        <div className="flex-1 flex flex-col min-w-0">
          <div className="h-[36px] flex items-start pl-[23px] gap-[30px] text-[16px] text-[#3c3c3c] shrink-0">
            <div className="h-[35px] w-[87px] pt-[1px] flex items-center justify-center border-b-[5px] border-[#0696d7] text-[#0696d7] font-bold tracking-[-0.4px]">SOLID</div>
            <div className="h-[33px] pt-[1px] pl-[18px] pr-[19px] flex items-center">SURFACE</div>
            <div className="h-[33px] pt-[1px] px-[19px] ml-[3px] flex items-center">MESH</div>
            <div className="h-[33px] pt-[1px] px-[19px] ml-[3px] flex items-center">SHEET METAL</div>
            <div className="h-[33px] pt-[1px] px-[19px] ml-[6px] flex items-center">PLASTIC</div>
            <div className="h-[33px] pt-[1px] px-[19px] ml-[4px] flex items-center">UTILITIES</div>
          </div>
          <div className="flex items-start">
            <Group label="CREATE" w="w-[342px]">
              <div className="flex gap-[16px] ml-[2px]"><SketchIcon /><ExtrudeIcon /><RevolveIcon /><HoleIcon /><PatternIcon /></div>
            </Group>
            <Sep />
            <Group label="AUTOMATE" w="w-[148px]"><AutomateIcon /></Group>
            <Sep />
            <Group label="MODIFY" w="w-[339px]" lc="pr-[8px]">
              <div className="flex gap-[17px]"><PressPullIcon /><FilletIcon /><ShellIcon /><CombineIcon /><OffsetIcon /></div>
            </Group>
            <Sep />
            <Group label="ASSEMBLE" w="w-[147px]">
              <div className="flex gap-[18px]"><NewComponentIcon /><JointIcon /></div>
            </Group>
            <Sep />
            <Group label="CONFIGURE" w="w-[156px]">
              <div className="flex gap-[17px]"><ConfigIcon /><TableIcon /></div>
            </Group>
            <Sep />
            <Group label="CONSTRUCT" w="w-[156px]"><ConstructIcon /></Group>
            <Sep />
            <Group label="INSPECT" w="w-[126px]"><InspectIcon /></Group>
            <Sep />
            <Group label="INSERT" w="w-[146px]" lc="pr-[4px]">
              <div className="flex gap-[14px]"><BoltIcon /><ImageIcon /></div>
            </Group>
            <Sep />
            <Group label="SELECT" w="w-[118px]"><SelectIcon /></Group>
          </div>
        </div>
      </div>

      <Canvas />

      {/* timeline */}
      <div className="h-[57px] shrink-0 bg-[#f0f0f0] border-t-2 border-[#cfcfcf] flex items-center">
        <svg width="18" height="20" viewBox="0 0 18 20" className="ml-[8px] mt-[14px] shrink-0"><path d="M0 1H3V19H0zM17 1V19L4 10z" fill="#666" /></svg>
        <svg width="20" height="18" viewBox="0 0 20 18" className="ml-[18px] mt-[14px] shrink-0"><path d="M14 0V18L0 9zM16 6H19V12H16z" fill="#666" /></svg>
        <svg width="19" height="22" viewBox="0 0 19 22" className="ml-[19px] mt-[14px] shrink-0"><path d="M0 0L19 11L0 22z" fill="#666" /></svg>
        <svg width="20" height="18" viewBox="0 0 20 18" className="ml-[16px] mt-[14px] shrink-0"><path d="M6 0V18L20 9zM1 6H4V12H1z" fill="#666" /></svg>
        <svg width="18" height="20" viewBox="0 0 18 20" className="ml-[18px] mt-[14px] shrink-0"><path d="M15 1H18V19H15zM1 1V19L14 10z" fill="#666" /></svg>
        <svg width="40" height="55" viewBox="0 0 40 55" className="ml-[36px] shrink-0 self-start">
          <path d="M1 15L5 9.5M8 15L12 9.5M16 15L20 9.5" stroke="#555" strokeWidth="3" fill="none" />
          <path d="M1 28Q1 26 3 25L8 22H20Q24 22 24 26V41L20 45H1z" fill="#bcc4d2" stroke="#444" strokeWidth="1.4" />
          <path d="M14 28L20 25L23 31L20 41L14 43z" fill="#dde3ec" />
          <path d="M13 49H15V55H13z" fill="#c8c8c8" />
          <path d="M22 13H39V19L33 26V55H30V26L22 19z" fill="#5f5f5f" />
        </svg>
        <svg width="24" height="24" viewBox="0 0 24 24" className="ml-auto mr-[18px] mt-[14px] shrink-0">
          <path fill="#666" d="M19.4 13a7.5 7.5 0 0 0 0-2l2.1-1.6-2-3.4-2.5 1a7.6 7.6 0 0 0-1.7-1L15 3.3h-4l-.4 2.7a7.6 7.6 0 0 0-1.7 1l-2.5-1-2 3.4L6.5 11a7.5 7.5 0 0 0 0 2l-2.1 1.6 2 3.4 2.5-1a7.6 7.6 0 0 0 1.7 1l.4 2.7h4l.4-2.7a7.6 7.6 0 0 0 1.7-1l2.5 1 2-3.4zM13 15.5a3.5 3.5 0 1 1 0-7 3.5 3.5 0 0 1 0 7z" />
        </svg>
      </div>
    </div>
  );
}
